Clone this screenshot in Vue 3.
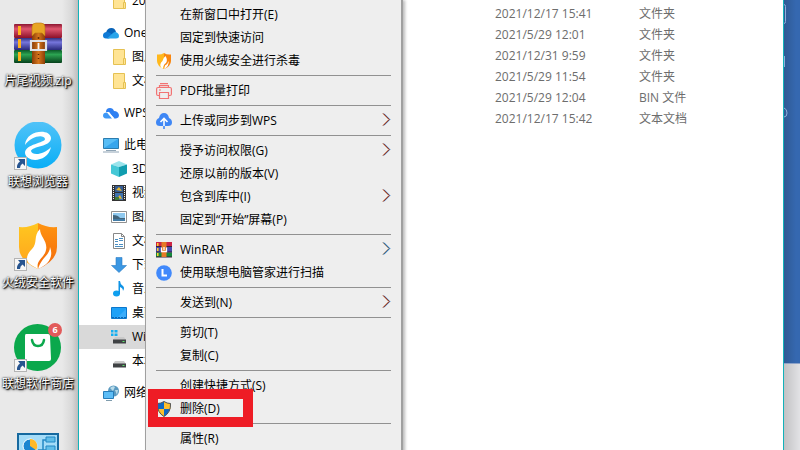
<template>
  <main class="screen">
    <section class="desktop">
      <a v-for="app in apps" :key="app.name" class="shortcut" href="#">
        <span class="shortcut-icon">
          <svg v-if="app.icon === 'rar'" viewBox="0 0 48 48">
            <defs>
              <linearGradient id="bookRed" x2="0" y2="1"><stop offset="0" stop-color="#8c1630" /><stop offset="0.35" stop-color="#e0566e" /><stop offset="1" stop-color="#8c1028" /></linearGradient>
              <linearGradient id="bookBlue" x2="0" y2="1"><stop offset="0" stop-color="#30307c" /><stop offset="0.35" stop-color="#7676dc" /><stop offset="1" stop-color="#29297a" /></linearGradient>
              <linearGradient id="bookGreen" x2="0" y2="1"><stop offset="0" stop-color="#0b5a28" /><stop offset="0.35" stop-color="#2ca452" /><stop offset="1" stop-color="#06401b" /></linearGradient>
              <linearGradient id="strap" x2="1" y2="0"><stop offset="0" stop-color="#8a3e08" /><stop offset="0.5" stop-color="#d6761c" /><stop offset="1" stop-color="#8a3e08" /></linearGradient>
            </defs>
            <rect x="0" y="3" width="48" height="14" rx="1" fill="url(#bookRed)" />
            <rect x="0" y="17" width="48" height="12" rx="1" fill="url(#bookBlue)" />
            <rect x="0" y="29" width="48" height="13" rx="1" fill="url(#bookGreen)" />
            <path d="M4 5h3v9H4zM4 18h3v9H4zM4 31h3v9H4z" fill="#ffb21c" />
            <rect x="18" y="12" width="13" height="31" fill="url(#strap)" />
            <path d="M18 15V6q0-4 4-4h5q4 0 4 4v9l-3-3h-7z" fill="#e8a524" stroke="#b87410" stroke-width="0.6" />
            <path d="M17 20h15v9H17z" fill="none" stroke="#dfe2e8" stroke-width="2.2" />
            <path d="M24.500 22v6" stroke="#f6f6f6" stroke-width="1.800" />
            <circle cx="24.500" cy="17" r="1" fill="#5e2a04" />
            <path d="M24.500 33v1m0 3v1" stroke="#5e2a04" stroke-width="1.500" />
          </svg>
          <svg v-else-if="app.icon === 'browser'" viewBox="0 0 48 48">
            <defs><linearGradient id="sky" x2="0" y2="1"><stop offset="0" stop-color="#52c3f8" /><stop offset="1" stop-color="#08aef6" /></linearGradient></defs>
            <circle cx="24" cy="23" r="23.500" fill="url(#sky)" />
            <path d="M11 23C12 8 36 6 37 16C37 25 18 24 17 29C18 34 30 33 37 25C34 41 12 41 11 31C11 22 31 21 31 17C30 12 17 14 11 23z" fill="#fff" />
          </svg>
          <svg v-else-if="app.icon === 'huorong'" viewBox="0 0 48 48">
            <defs>
              <linearGradient id="shieldL" x2="0" y2="1"><stop offset="0" stop-color="#ffc720" /><stop offset="1" stop-color="#ffa21c" /></linearGradient>
              <linearGradient id="shieldR" x2="0" y2="1"><stop offset="0" stop-color="#ff9410" /><stop offset="1" stop-color="#f36a0c" /></linearGradient>
            </defs>
            <path d="M24 0Q15 5 5 4V24Q5 38 24 46z" fill="url(#shieldL)" />
            <path d="M24 0Q33 5 43 4V24Q43 38 24 46z" fill="url(#shieldR)" />
            <path d="M26 6C19 13 24 20 18 26C12 32 11 38 17 42L24 46C21 38 31 34 32 27C34 18 26 14 26 6z" fill="#fff" />
            <path d="M36 24C36 32 27 35 24 46C34 42 40 34 36 24z" fill="#fff" />
          </svg>
          <svg v-else-if="app.icon === 'store'" viewBox="0 0 48 48">
            <circle cx="23.500" cy="23.500" r="23.500" fill="#0ba84c" />
            <path d="M12 10H34Q36 10 36 12L37 35Q37 37 35 37H13Q11 37 11 35L11 12Q11 10 12 10z" fill="#fff" />
            <path d="M18 16Q19 22 24 22T30 16" fill="none" stroke="#0ba84c" stroke-width="2.500" stroke-linecap="round" />
          </svg>
          <svg v-else viewBox="0 0 48 48">
            <rect x="4" y="9" width="40" height="38" fill="#a4dcf8" stroke="#16699f" stroke-width="2" />
            <circle cx="16" cy="21" r="7" fill="#1c86d1" stroke="#fff" />
            <path d="M16 21V14A7 7 0 0 1 22 25z" fill="#ffb928" />
            <path d="M24 25h5V15h3M29 25h3" fill="none" stroke="#2388c4" stroke-width="1.500" />
            <path d="M32 12h9v5h-9zM32 21h9v5h-9z" fill="#60bde8" stroke="#2388c4" />
          </svg>
          <svg v-if="app.link" class="link-mark" viewBox="0 0 13 13">
            <rect x="0.500" y="0.500" width="12" height="12" fill="#f7f7f7" stroke="#b4b4b4" />
            <path d="M4 2h7v7L8.500 6.500Q6 8 6 11H3Q2.500 7 6 4.500z" fill="#27548f" />
          </svg>
          <span v-if="app.badge" class="badge">{{ app.badge }}</span>
        </span>
        <span class="shortcut-name">{{ app.name }}</span>
      </a>
    </section>

    <section class="window">
      <nav class="tree">
        <a
          v-for="(node, i) in tree"
          :key="i"
          href="#"
          class="node"
          :class="{ child: node.child, group: !node.child, active: node.active }">
          <svg class="icon" viewBox="0 0 16 16">
            <g v-if="node.icon === 'folder'">
              <path d="M2.500 0.500h11v15h-11z" fill="#ffe494" stroke="#e5c152" />
              <path d="M12.500 9.500h2v6h-2z" fill="#ffe494" stroke="#e5c152" />
            </g>
            <g v-else-if="node.icon === 'onedrive'">
              <path d="M3 8Q4 3 8.500 3Q12 3 13 7L8 11z" fill="#0863b8" />
              <path d="M0 10.500Q0 7 4 7Q6 7 10 10L6 13.500H3Q0 13.500 0 10.500z" fill="#0f7ad6" />
              <path d="M4 13.500L10 8Q12 6 14.500 8Q16 9 16 11Q16 13.500 13 13.500z" fill="#28a4ea" />
            </g>
            <g v-else-if="node.icon === 'wps'">
              <path d="M3 7Q3 3 7 3Q10 3 11 6Q15 6 16 10Q16 13 13 13.500H11L6 7z" fill="#2f80f2" />
              <path d="M0 10.500Q0 7.500 4 7.500L9 13.500H3Q0 13 0 10.500z" fill="#3f98f6" />
              <path d="M4.500 7.500L5.500 6.800L11.500 13.500H9.500z" fill="#fff" />
            </g>
            <g v-else-if="node.icon === 'pc'">
              <path d="M0.500 1.500h15v10h-15z" fill="#58bdf5" stroke="#2c7cae" />
              <path d="M1 11L15 2v9z" fill="#36a5ec" />
              <path d="M0 15h16M3 13.500h10" stroke="#8fa4b5" />
            </g>
            <g v-else-if="node.icon === 'cube'">
              <path d="M0 3.500L8 0l8 3.500L8 6z" fill="#9ae4ec" />
              <path d="M0 3.500L8 6v10l-8-3.500z" fill="#45c8d6" />
              <path d="M16 3.500L8 6v10l8-3.500z" fill="#119daf" />
            </g>
            <g v-else-if="node.icon === 'video'">
              <path d="M1 0h14v16H1z" fill="#333" />
              <path d="M4 1h8v6H4z" fill="#365d94" />
              <path d="M4 8h8v7H4z" fill="#3f73b0" />
              <path d="M5 5l3-3 3 4zM6 13l3-3 2 4z" fill="#e4b72f" />
              <path d="M4 12h4v3H4z" fill="#427c38" />
              <path d="M2.500 1v14M13.500 1v14" stroke="#f1f1f1" stroke-dasharray="1 1" />
            </g>
            <g v-else-if="node.icon === 'picture'">
              <path d="M0.500 2.500h15v11h-15z" fill="#fff" stroke="#909090" />
              <path d="M2 4h12v8H2z" fill="#8fc9ef" />
              <path d="M2 6q5 0 7 3h5v3H2z" fill="#41647b" />
              <path d="M2 10h12v2H2z" fill="#437ca6" />
            </g>
            <g v-else-if="node.icon === 'doc'">
              <path d="M2.500 0.500h8l3 3v12h-11z" fill="#fff" stroke="#888" />
              <path d="M10.500 0.500v3h3" fill="none" stroke="#888" />
              <path d="M4 6.500h3m1-1h4M4 8.500h3m1-1h4M4 11.500h3m1 0h4M4 13.500h8" stroke="#4b8fc2" />
            </g>
            <path v-else-if="node.icon === 'down'" d="M5 0.500h6v8h4.500L8 15.500L0.500 8.500H5z" fill="#3b97e3" stroke="#2e7cc2" stroke-width="0.600" />
            <g v-else-if="node.icon === 'music'">
              <ellipse cx="5.500" cy="12.500" rx="3.500" ry="3" fill="#0fa0ef" />
              <path d="M7.500 0h1.500q0 3 3 5q2 2 0 5q0-3-3-4v7H7.500z" fill="#0f93e6" />
            </g>
            <g v-else-if="node.icon === 'desk'">
              <path d="M0.500 2.500h15v11h-15z" fill="#1ea1f7" stroke="#0c77cc" />
              <path d="M6 13L15 4v9z" fill="#3badfb" />
              <path d="M1 12.500h14" stroke="#0b66b4" stroke-dasharray="2 1" />
            </g>
            <g v-else-if="node.icon === 'disk' || node.icon === 'system'">
              <path v-if="node.icon === 'system'" d="M0 1h2.500v2.500H0zM3.500 1h3v2.500h-3zM0 4.500h2.500V7H0zM3.500 4.500h3V7h-3z" fill="#12aef0" />
              <path d="M4 8h9l2 3H2z" fill="#c9c9c9" />
              <path d="M2 10.500h13v4H2z" fill="#3f4244" />
              <path d="M11.500 12.500h2" stroke="#5ce468" />
            </g>
            <g v-else>
              <circle cx="10.500" cy="6" r="5.500" fill="#5b9ac0" />
              <path d="M7 3q3-3 5-1l-2 4zM12 5l3 0-1 5z" fill="#b9dbe9" />
              <path d="M0.500 6.500h10v7h-10z" fill="#5dbdf6" stroke="#277cb8" />
              <path d="M3 15.500h6" stroke="#7f9cad" />
            </g>
          </svg>
          <span>{{ node.name }}</span>
        </a>
      </nav>
      <table class="files">
        <tbody>
          <tr v-for="(file, i) in files" :key="i">
            <td class="date">{{ file[0] }}</td>
            <td>{{ file[1] }}</td>
          </tr>
        </tbody>
      </table>
    </section>

    <aside class="backdrop">
      <div class="backdrop-blue">
        <svg viewBox="0 0 16 130" width="16" height="130" fill="none" stroke="#8fb0dc">
          <path d="M0 4.500q1.500 0 1.500 2v15q0 2-1.500 2M0.500 56v11M0 108q3 1 3 5t-3 4" />
        </svg>
      </div>
    </aside>

    <ul class="menu">
      <li v-for="(item, i) in menu" :key="i" :class="{ line: !item.name }">
        <button v-if="item.name" type="button" class="item">
          <svg class="icon" viewBox="0 0 16 16">
            <g v-if="item.icon === 'huorong'">
              <path d="M8 0Q5 2 1 1.500V8q0 5 7 8z" fill="#ffb81d" />
              <path d="M8 0q3 2 7 1.500V8q0 5-7 8z" fill="#f9860f" />
              <path d="M9.500 3Q7 5 6.500 8Q3 11 5 14.500L7 15.500Q7 12 10 10Q12 7 9.500 3z" fill="#fff" />
              <path d="M12.500 8Q12 11 9 12.500L8 16Q13.500 13 12.500 8z" fill="#fff" />
            </g>
            <g v-else-if="item.icon === 'printer'" fill="none" stroke="#f27373" stroke-width="1.200">
              <path d="M4 0.600h8M3.500 4V2.600h9V4" />
              <path d="M3 12.500H2q-1.400 0-1.400-1.500V6Q.6 4.500 2 4.500h12q1.400 0 1.400 1.500v5q0 1.500-1.400 1.500h-1M3 7h2" />
              <path d="M3.500 9.500h9v6h-9z" />
            </g>
            <g v-else-if="item.icon === 'upload'">
              <path d="M3 5q1-5 5-5t5 5q3 1 3 4.500T12 13H4Q0 13 0 9.500T3 5z" fill="#3f87f5" />
              <path d="M8 13V6M4.500 9L8 5.500 11.500 9" fill="none" stroke="#fff" stroke-width="1.600" />
              <path d="M8 13v3" stroke="#3f87f5" stroke-width="1.600" />
            </g>
            <g v-else-if="item.icon === 'rar'">
              <path d="M0 0h16v5H0z" fill="#cc2445" />
              <path d="M0 5h16v5.500H0z" fill="#4649ad" />
              <path d="M0 10.500h16V15H0z" fill="#148a3b" />
              <path d="M0 4.500h16M0 10h16M0 15h16" stroke="#39213c" />
              <path d="M1 1h1.500v3H1zM1 6h1.500v3H1zM1 11h1.500v3H1z" fill="#ffd02e" />
              <path d="M5.500 0h5v15h-5z" fill="#e57a26" />
              <path d="M5.500 5.500v4h5v-4M8 5v3" fill="none" stroke="#fff" stroke-width="1.300" />
            </g>
            <g v-else-if="item.icon === 'lenovo'">
              <circle cx="8" cy="8" r="7.800" fill="#4189fb" />
              <path d="M6.500 4v6.500H11" fill="none" stroke="#fff" stroke-width="2" />
            </g>
            <g v-else-if="item.icon === 'uac'">
              <path d="M8 .5Q5 2.500 1.500 2.500q-.5 9 6.500 13 7-4 6.500-13Q11 2.500 8 .5z" fill="#0e68c4" />
              <path d="M8 .5q3 2 6.500 2V8H8zM8 8H1.700Q2.500 12.500 8 15.500z" fill="#fdbe2c" />
              <path d="M8 .5Q5 2.500 1.500 2.500q-.5 9 6.500 13 7-4 6.500-13Q11 2.500 8 .5z" fill="none" stroke="#555" />
            </g>
          </svg>
          <span class="label">{{ item.name }}</span>
          <svg v-if="item.sub" class="chevron" viewBox="0 0 9 13" fill="none">
            <path d="M0.500 0.500l6 6-6 6" stroke="#e8b48a" />
            <path d="M2 0.500l6 6-6 6" stroke="#5a9fe0" />
            <path d="M1.300 0.500l6 6-6 6" :stroke="item.sub" />
          </svg>
        </button>
        <span v-if="item.marked" class="marker"></span>
      </li>
    </ul>
  </main>
</template>

<script setup>
const apps = [
  { name: '片尾视频.zip', icon: 'rar' },
  { name: '联想浏览器', icon: 'browser', link: true },
  { name: '火绒安全软件', icon: 'huorong', link: true },
  { name: '联想软件商店', icon: 'store', link: true, badge: 6 },
  { name: '', icon: 'panel' }
];

const tree = [
  { name: '2021', icon: 'folder', child: true },
  { name: 'OneDrive', icon: 'onedrive' },
  { name: '图片', icon: 'folder', child: true },
  { name: '文档', icon: 'folder', child: true },
  { name: 'WPS网盘', icon: 'wps' },
  { name: '此电脑', icon: 'pc' },
  { name: '3D 对象', icon: 'cube', child: true },
  { name: '视频', icon: 'video', child: true },
  { name: '图片', icon: 'picture', child: true },
  { name: '文档', icon: 'doc', child: true },
  { name: '下载', icon: 'down', child: true },
  { name: '音乐', icon: 'music', child: true },
  { name: '桌面', icon: 'desk', child: true },
  { name: 'Windows', icon: 'system', child: true, active: true },
  { name: '本地磁盘', icon: 'disk', child: true },
  { name: '网络', icon: 'network' }
];

const files = [
  ['2021/12/17 15:41', '文件夹'],
  ['2021/5/29 12:01', '文件夹'],
  ['2021/12/31 9:59', '文件夹'],
  ['2021/5/29 11:54', '文件夹'],
  ['2021/5/29 12:04', 'BIN 文件'],
  ['2021/12/17 15:42', '文本文档']
];

const red = '#7a2020';
const blue = '#1c5a90';

// an empty entry is a separator
const menu = [
  { name: '在新窗口中打开(E)' },
  { name: '固定到快速访问' },
  { name: '使用火绒安全进行杀毒', icon: 'huorong' },
  {},
  { name: 'PDF批量打印', icon: 'printer' },
  {},
  { name: '上传或同步到WPS', icon: 'upload', sub: red },
  {},
  { name: '授予访问权限(G)', sub: red },
  { name: '还原以前的版本(V)' },
  { name: '包含到库中(I)', sub: red },
  { name: '固定到“开始”屏幕(P)' },
  {},
  { name: 'WinRAR', icon: 'rar', sub: blue },
  { name: '使用联想电脑管家进行扫描', icon: 'lenovo' },
  {},
  { name: '发送到(N)', sub: red },
  {},
  { name: '剪切(T)' },
  { name: '复制(C)' },
  {},
  { name: '创建快捷方式(S)' },
  { name: '删除(D)', icon: 'uac', marked: true },
  {},
  { name: '属性(R)' }
];
</script>

<style>
body {
  margin: 0;
}
</style>

<style scoped>
.screen {
  position: relative;
  display: flex;
  height: 100vh;
  overflow: hidden;
  font: 12px/20px "Open Sans", "Noto Sans CJK SC", sans-serif;
  color: #000;
  background: #e9e9e9;
}

a {
  color: inherit;
  text-decoration: none;
}

.desktop {
  flex: none;
  width: 78px;
  padding-top: 21px;
  box-sizing: border-box;
  background: linear-gradient(to right, #e9e9e9 62px, #d8d8d8 72px, #bdbdbd);
}

.shortcut {
  display: flex;
  flex-direction: column;
  align-items: center;
  width: 76px;
  height: 101px;
}

.shortcut-icon {
  position: relative;
  width: 48px;
  height: 48px;
}

.shortcut-icon svg {
  display: block;
  width: 48px;
  height: 48px;
}

.shortcut-icon .link-mark {
  position: absolute;
  left: 0;
  bottom: 0;
  width: 13px;
  height: 13px;
}

.badge {
  position: absolute;
  top: -1px;
  right: 0;
  width: 14px;
  border-radius: 7px;
  background: #e25a5a;
  color: #fff;
  font-size: 9px;
  font-weight: bold;
  line-height: 14px;
  text-align: center;
}

.shortcut-name {
  line-height: 24px;
  white-space: nowrap;
  color: #fff;
  text-shadow: 1px 1px 1px #000, 0 0 2px #000, 1px 1px 3px #000;
}

.window {
  flex: 1;
  display: flex;
  min-width: 0;
  background: #fff;
  border: solid #12b2ba;
  border-width: 0 1px;
}

.tree {
  flex: none;
  width: 72px;
  margin-top: -11px;
  overflow: hidden;
}

.node {
  display: flex;
  align-items: center;
  gap: 5px;
  height: 24px;
  padding-left: 24px;
  white-space: nowrap;
}

.node.child {
  padding-left: 32px;
}

.node.group {
  margin-top: 8px;
}

.node.active {
  background: #d9d9d9;
}

.icon {
  flex: none;
  width: 16px;
  height: 16px;
}

.files {
  align-self: flex-start;
  margin: 3px 0 0 344px;
  border-spacing: 0;
  color: #6d6d6d;
}

.files td {
  height: 21px;
  padding: 0;
  white-space: nowrap;
}

.files .date {
  width: 144px;
}

.backdrop {
  flex: none;
  width: 16px;
  background: linear-gradient(to right, #c2c2c4, #e2e2e5);
}

.backdrop-blue {
  height: 363px;
  background: linear-gradient(to right, #2f5a94, #3568b0 12px);
  border-bottom: 1px solid #8ea3c8;
}

.menu {
  position: absolute;
  top: 0;
  left: 145px;
  width: 258px;
  box-sizing: border-box;
  margin: 0;
  padding: 3px 10px;
  list-style: none;
  background: #eee;
  border: solid #a0a0a0;
  border-width: 0 2px 0 1px;
  box-shadow: 2px 0 3px #bbb;
}

.menu li {
  position: relative;
}

.menu .line {
  height: 1px;
  margin: 3px 0;
  background: #919191;
}

.item {
  display: flex;
  align-items: center;
  width: 100%;
  height: 23px;
  padding: 0;
  border: 0;
  background: none;
  color: inherit;
  font: inherit;
  text-align: left;
}

.label {
  flex: 1;
  margin-left: 8px;
  white-space: nowrap;
}

.chevron {
  width: 9px;
  height: 13px;
  margin-bottom: 2px;
}

.marker {
  position: absolute;
  z-index: 1;
  top: -8px;
  left: -8px;
  width: 105px;
  height: 38px;
  box-sizing: border-box;
  border: 10px solid #ee1c25;
  pointer-events: none;
}
</style>
